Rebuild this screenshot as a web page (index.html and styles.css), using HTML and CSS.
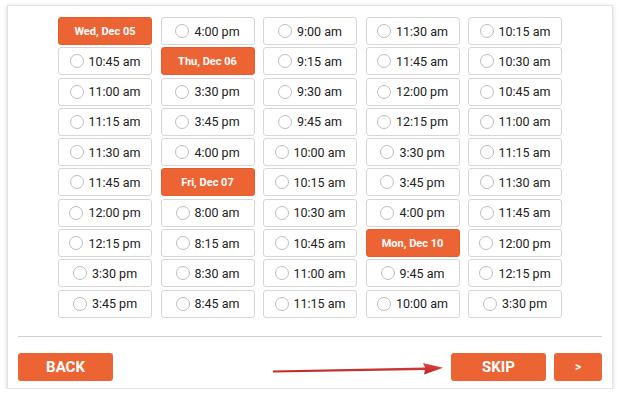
FILE: index.html
```html
<!DOCTYPE html>
<html lang="en">
<head>
    <meta charset="UTF-8">
    <title>Pick a Time</title>
    <link rel="stylesheet" href="styles.css">
</head>
<body>

<div class="panel">
    <div class="slots">
        <div class="col">
            <div class="day">Wed, Dec 05</div>
            <label class="slot"><span class="radio"></span>10:45 am</label>
            <label class="slot"><span class="radio"></span>11:00 am</label>
            <label class="slot"><span class="radio"></span>11:15 am</label>
            <label class="slot"><span class="radio"></span>11:30 am</label>
            <label class="slot"><span class="radio"></span>11:45 am</label>
            <label class="slot"><span class="radio"></span>12:00 pm</label>
            <label class="slot"><span class="radio"></span>12:15 pm</label>
            <label class="slot"><span class="radio"></span>3:30 pm</label>
            <label class="slot"><span class="radio"></span>3:45 pm</label>
        </div>
        <div class="col">
            <label class="slot"><span class="radio"></span>4:00 pm</label>
            <div class="day">Thu, Dec 06</div>
            <label class="slot"><span class="radio"></span>3:30 pm</label>
            <label class="slot"><span class="radio"></span>3:45 pm</label>
            <label class="slot"><span class="radio"></span>4:00 pm</label>
            <div class="day">Fri, Dec 07</div>
            <label class="slot"><span class="radio"></span>8:00 am</label>
            <label class="slot"><span class="radio"></span>8:15 am</label>
            <label class="slot"><span class="radio"></span>8:30 am</label>
            <label class="slot"><span class="radio"></span>8:45 am</label>
        </div>
        <div class="col">
            <label class="slot"><span class="radio"></span>9:00 am</label>
            <label class="slot"><span class="radio"></span>9:15 am</label>
            <label class="slot"><span class="radio"></span>9:30 am</label>
            <label class="slot"><span class="radio"></span>9:45 am</label>
            <label class="slot"><span class="radio"></span>10:00 am</label>
            <label class="slot"><span class="radio"></span>10:15 am</label>
            <label class="slot"><span class="radio"></span>10:30 am</label>
            <label class="slot"><span class="radio"></span>10:45 am</label>
            <label class="slot"><span class="radio"></span>11:00 am</label>
            <label class="slot"><span class="radio"></span>11:15 am</label>
        </div>
        <div class="col">
            <label class="slot"><span class="radio"></span>11:30 am</label>
            <label class="slot"><span class="radio"></span>11:45 am</label>
            <label class="slot"><span class="radio"></span>12:00 pm</label>
            <label class="slot"><span class="radio"></span>12:15 pm</label>
            <label class="slot"><span class="radio"></span>3:30 pm</label>
            <label class="slot"><span class="radio"></span>3:45 pm</label>
            <label class="slot"><span class="radio"></span>4:00 pm</label>
            <div class="day">Mon, Dec 10</div>
            <label class="slot"><span class="radio"></span>9:45 am</label>
            <label class="slot"><span class="radio"></span>10:00 am</label>
        </div>
        <div class="col">
            <label class="slot"><span class="radio"></span>10:15 am</label>
            <label class="slot"><span class="radio"></span>10:30 am</label>
            <label class="slot"><span class="radio"></span>10:45 am</label>
            <label class="slot"><span class="radio"></span>11:00 am</label>
            <label class="slot"><span class="radio"></span>11:15 am</label>
            <label class="slot"><span class="radio"></span>11:30 am</label>
            <label class="slot"><span class="radio"></span>11:45 am</label>
            <label class="slot"><span class="radio"></span>12:00 pm</label>
            <label class="slot"><span class="radio"></span>12:15 pm</label>
            <label class="slot"><span class="radio"></span>3:30 pm</label>
        </div>
    </div>

    <div class="footer">
        <button class="btn btn-back">BACK</button>
        <div class="spacer"></div>
        <button class="btn btn-skip">SKIP</button>
        <button class="btn btn-next">&gt;</button>

        <!-- annotation arrow pointing at skip -->
        <svg class="arrow" width="172" height="14" viewBox="0 0 172 14">
            <defs>
                <linearGradient id="shaft" x1="0" y1="0" x2="0" y2="1">
                    <stop offset="0" stop-color="#e04a44"/>
                    <stop offset="1" stop-color="#b52020"/>
                </linearGradient>
            </defs>
            <polygon points="0,8.4 152,5.4 150,1 170,5.8 151,12.5 152,7.9 0,10.6" fill="url(#shaft)"/>
        </svg>
    </div>
</div>

</body>
</html>
```

FILE: styles.css
```css
body {
    margin: 0;
    background: #fff;
    font-family: 'Roboto', 'Liberation Sans', sans-serif;
}

/* Outer card */
.panel {
    position: relative;
    margin: 5px 0 0 7px;
    width: 606px;
    height: 384px;
    box-sizing: border-box;
    background: #fff;
    border: 1px solid #e2e2e2;
    box-shadow: 0 1px 4px rgba(0, 0, 0, 0.18);
}

/* Time slot columns */
.slots {
    display: flex;
    gap: 8.5px;
    padding: 11px 0 0 50px;
}
.col {
    display: flex;
    flex-direction: column;
    gap: 2.3px;
    width: 94px;
}
.slot, .day {
    height: 28px;
    box-sizing: border-box;
    border-radius: 3px;
    display: flex;
    align-items: center;
    justify-content: center;
}
.slot {
    border: 1px solid #d6d6d6;
    background: #fff;
    color: #222;
    font-size: 12.5px;
    cursor: pointer;
}
.radio {
    width: 14px;
    height: 14px;
    box-sizing: border-box;
    border: 1px solid #bdbdbd;
    border-radius: 50%;
    margin-right: 5px;
}
.day {
    background: #ec6434;
    border: 1px solid #e55c2c;
    color: #fff;
    font-size: 11px;
    font-weight: bold;
}

/* Footer with buttons */
.footer {
    position: relative;
    display: flex;
    gap: 8px;
    margin: 18px 10px 0;
    padding-top: 16px;
    border-top: 1px solid #d0d0d0;
}
.spacer {
    flex: 1;
}
.btn {
    height: 28px;
    border: none;
    border-radius: 3px;
    background: #ec6434;
    color: #fff;
    font-family: inherit;
    font-weight: bold;
    font-size: 15px;
    cursor: pointer;
    padding: 0;
}
.btn-back, .btn-skip {
    width: 95px;
}
.btn-next {
    width: 48px;
    font-size: 12px;
}

.arrow {
    position: absolute;
    left: 255px;
    top: 25px;
}
```
